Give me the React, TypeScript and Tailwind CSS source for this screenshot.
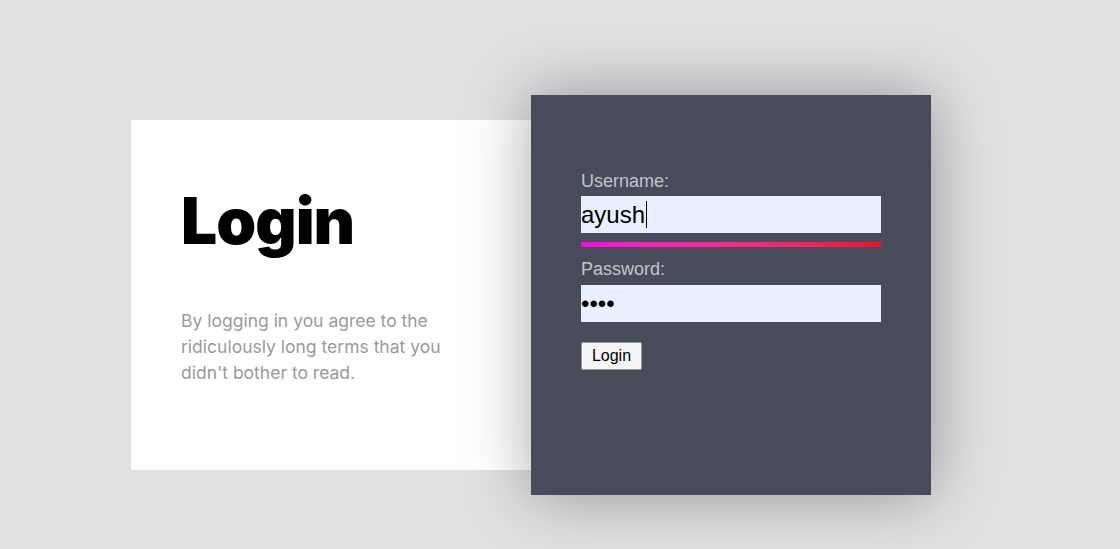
export default function App() {
  return (
    <div className="min-h-screen bg-[#e1e1e3] pl-[131px] pt-[95px]">
      <div className="flex items-center">
        {/* Intro card */}
        <div className="h-[350px] w-[400px] bg-white px-[50px] pt-[69px] font-['Inter',sans-serif]">
          <h1 className="text-[64px] font-black leading-none tracking-[-1px] text-black">
            Login
          </h1>
          <p className="mt-[55px] text-[17.5px] leading-[26px] text-[#9a9a9a]">
            By logging in you agree to the ridiculously long terms that you
            didn't bother to read.
          </p>
        </div>

        {/* Form panel */}
        <div className="relative h-[400px] w-[400px] bg-[#484b5a] px-[50px] pt-[76px] font-['Liberation_Sans',Arial,sans-serif] shadow-[0_0_60px_rgba(0,0,0,0.35)]">
          <label className="block text-[18px] leading-[21px] text-[#c4c4c6]">
            Username:
          </label>
          <div className="mt-[4px] flex h-[37px] w-[300px] items-center bg-[#e8f0fe] text-[24px] text-black">
            <span>ayush</span>
            <span className="ml-[1px] h-[27px] w-[1px] bg-black" />
          </div>
          <div className="mt-[9px] h-[5px] w-[300px] bg-gradient-to-r from-[#ff00e0] to-[#ff0a1c]" />

          <label className="mt-[12px] block text-[18px] leading-[21px] text-[#c4c4c6]">
            Password:
          </label>
          <input
            type="password"
            readOnly
            value="abcd"
            className="mt-[5px] block h-[37px] w-[300px] bg-[#e8f0fe] text-[24px] text-black outline-none"
          />

          <button className="mt-[20px] flex h-[28px] w-[61px] items-center justify-center rounded-[2px] border border-[#9a9a9a] bg-[#f5f5f5] text-[16px] text-black">
            Login
          </button>
        </div>
      </div>
    </div>
  );
}
